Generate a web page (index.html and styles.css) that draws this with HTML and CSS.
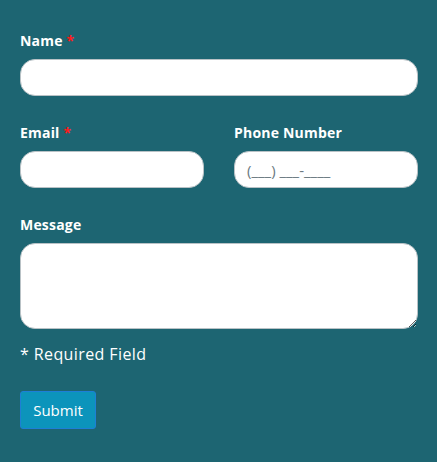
FILE: index.html
```html
<!DOCTYPE html>
<html lang="en">
<head>
<meta charset="utf-8">
<link rel="stylesheet" href="styles.css">
</head>
<body>
<form class="form">
  <div class="field">
    <label class="label">Name <span class="req">*</span></label>
    <input class="input" type="text">
  </div>
  <div class="row">
    <div class="field">
      <label class="label">Email <span class="req">*</span></label>
      <input class="input" type="email">
    </div>
    <div class="field">
      <label class="label">Phone Number</label>
      <input class="input" type="tel" placeholder="(___) ___-____">
    </div>
  </div>
  <div class="field field-last">
    <label class="label">Message</label>
    <textarea class="input textarea"></textarea>
  </div>
  <p class="note">* Required Field</p>
  <button class="submit" type="button">Submit</button>
</form>
</body>
</html>
```
FILE: styles.css
```css
html, body {
  margin: 0;
  background: #1d6572;
}
body {
  padding: 31px 19px 20px 20px;
  font-family: "Open Sans", "Noto Sans", sans-serif;
  color: #fff;
}
.form {
  display: flex;
  flex-direction: column;
}
.field {
  display: flex;
  flex-direction: column;
  margin-bottom: 27px;
  min-width: 0;
}
.row {
  display: grid;
  grid-template-columns: minmax(0, 1fr) minmax(0, 1fr);
  column-gap: 30px;
}
.label {
  font-weight: 700;
  font-size: 14px;
  line-height: 20px;
  margin-bottom: 8px;
  letter-spacing: 0.2px;
}
.req {
  color: #ff1a1a;
}
.input {
  box-sizing: border-box;
  width: 100%;
  height: 37px;
  border: 1px solid #b9c2c6;
  border-radius: 15px;
  background: #fff;
  padding: 0 12px;
  font-family: "Open Sans", sans-serif;
  font-size: 15px;
  color: #333;
  outline: none;
}
.input::placeholder {
  color: #6b7a82;
}
.textarea {
  height: 86px;
  resize: vertical;
}
.field-last {
  margin-bottom: 14px;
}
.note {
  margin: 0 0 26px;
  font-size: 16px;
  line-height: 22px;
  letter-spacing: 0.4px;
}
.submit {
  align-self: flex-start;
  box-sizing: border-box;
  width: 76px;
  height: 38px;
  background: #0c94bb;
  border: 1px solid #1e7fd6;
  border-radius: 3px;
  color: #fff;
  font-family: "Open Sans", sans-serif;
  font-size: 15px;
}
```
